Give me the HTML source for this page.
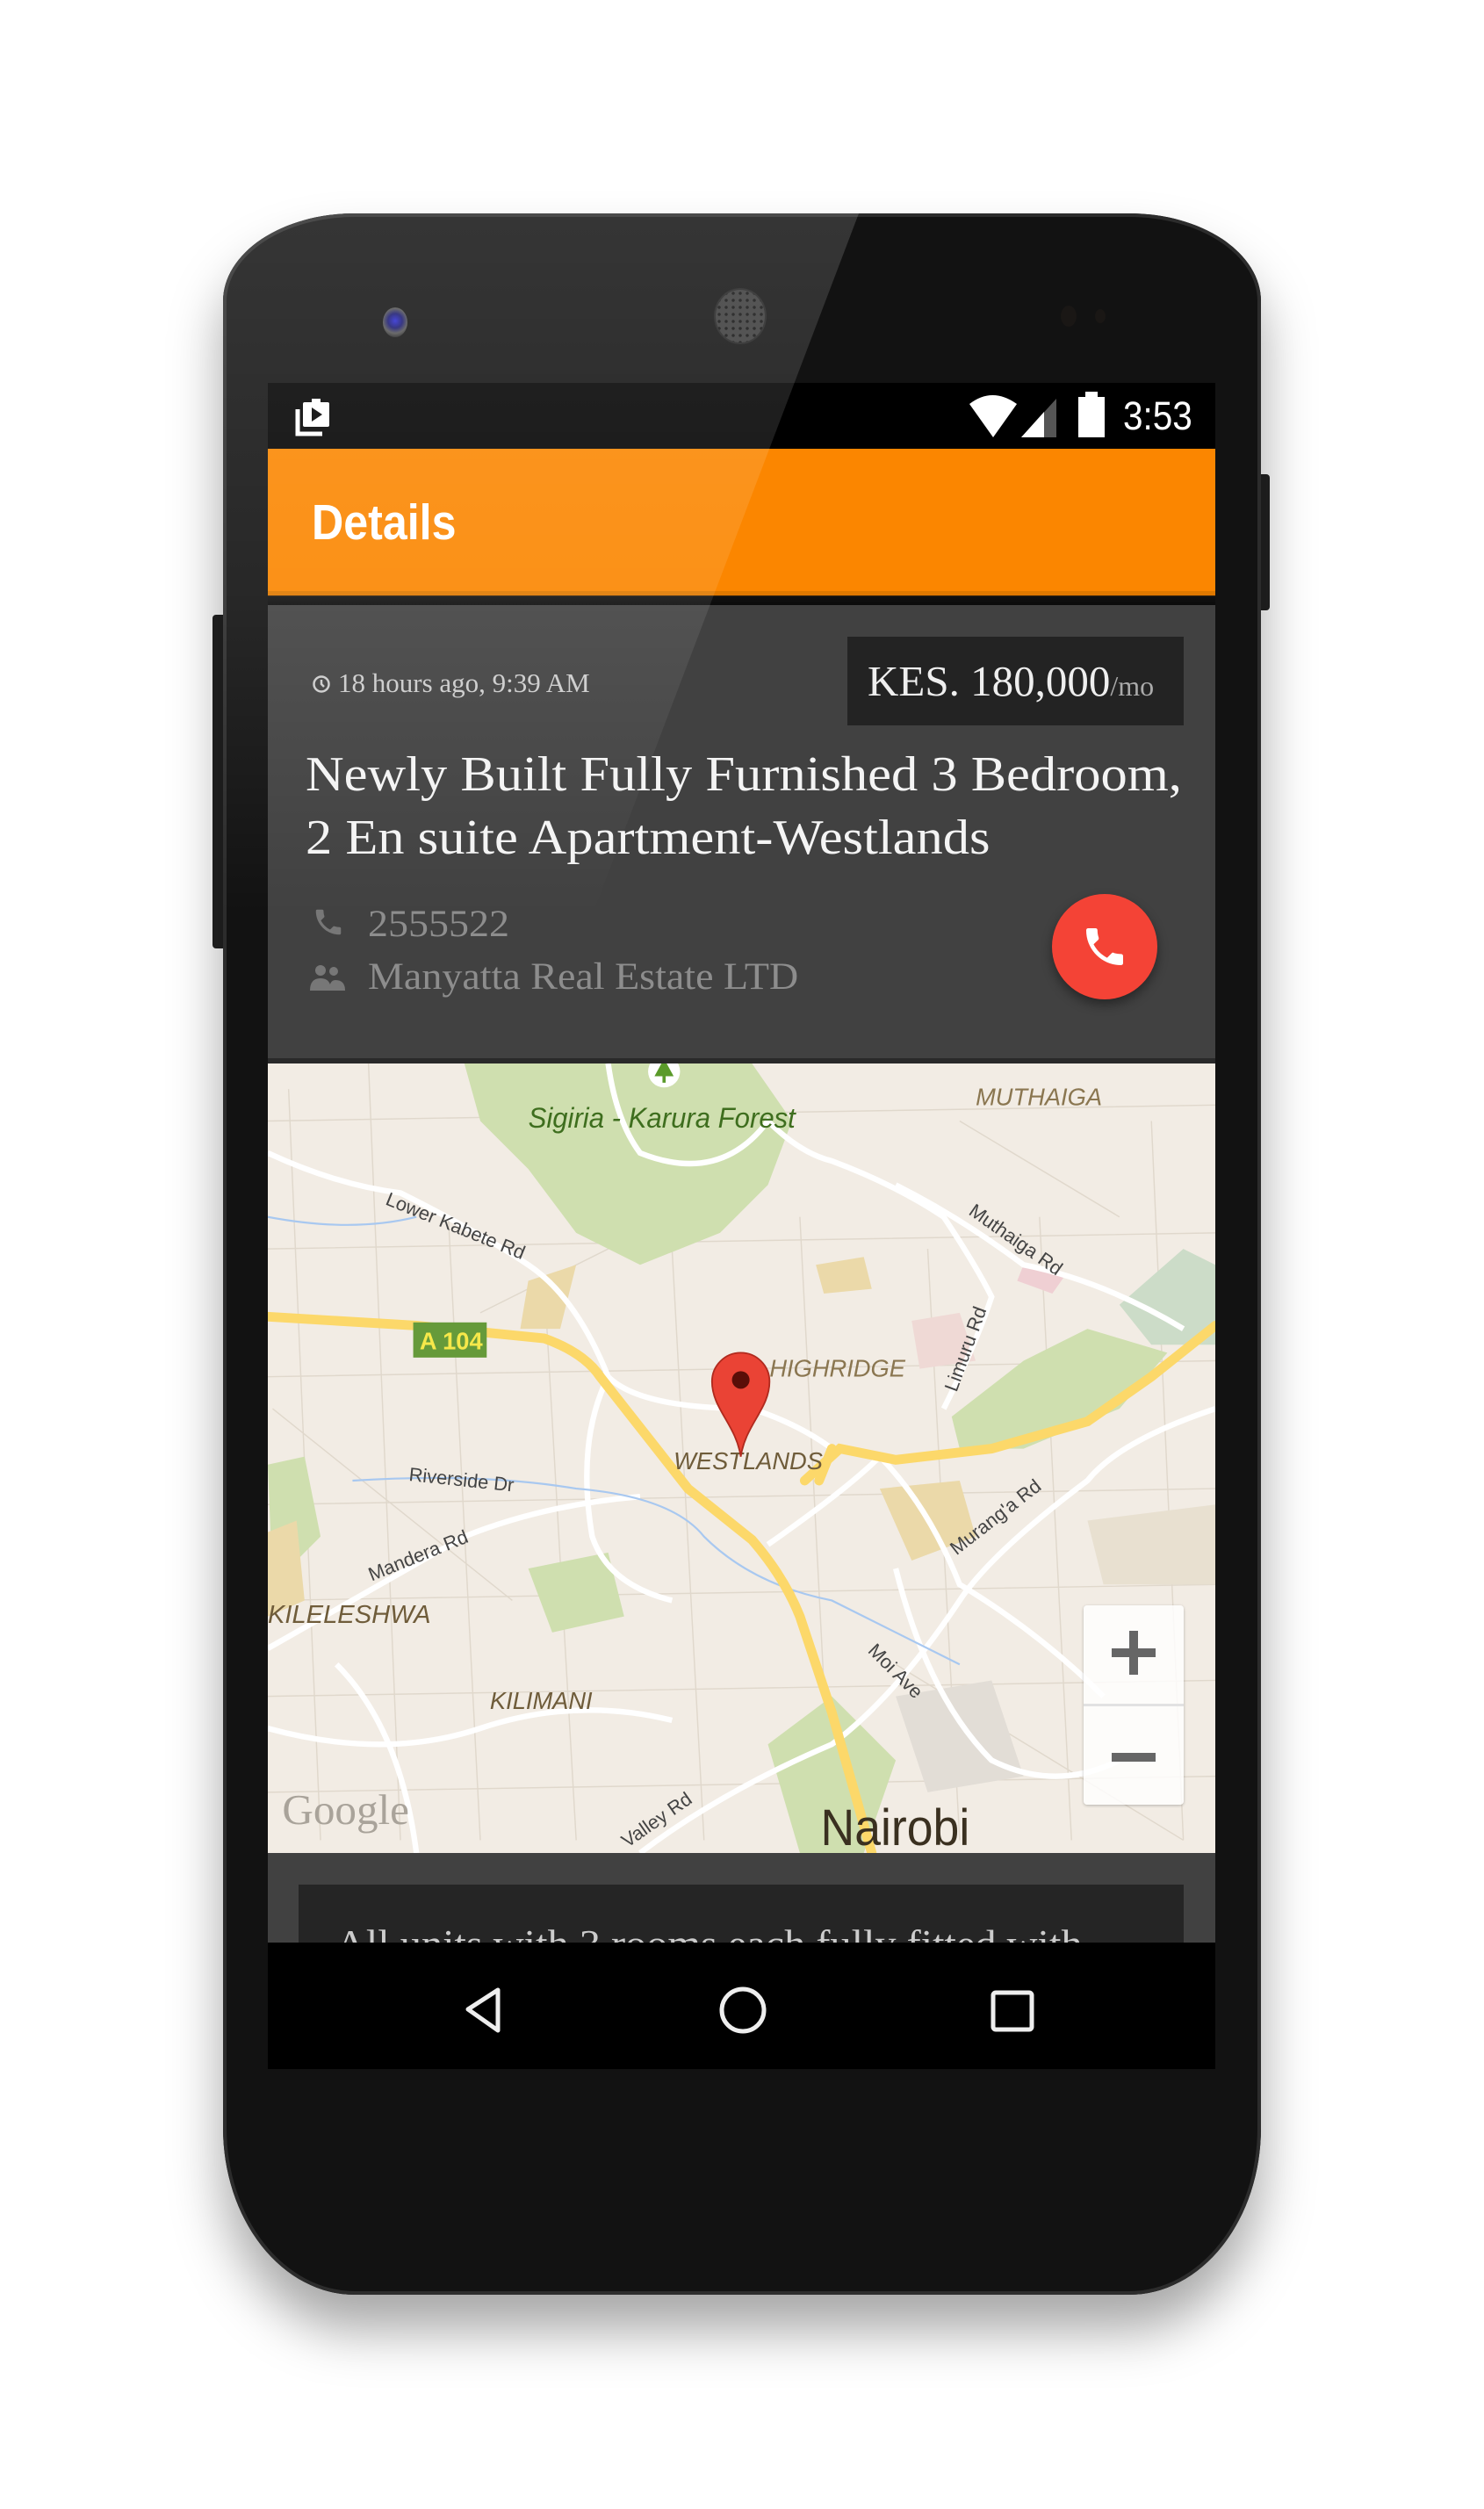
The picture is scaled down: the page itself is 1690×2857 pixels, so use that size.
<!DOCTYPE html>
<html><head><meta charset="utf-8">
<style>
*{margin:0;padding:0;box-sizing:border-box}
html,body{width:1690px;height:2857px;background:#fff;overflow:hidden;position:relative}
.abs{position:absolute}
.phone{left:254px;top:243px;width:1182px;height:2370px;background:#121212;border-radius:150px 150px 150px 150px / 100px 100px 190px 190px;box-shadow:0 40px 60px rgba(0,0,0,.35),inset 0 0 0 4px #2c2c2c;overflow:hidden}
.glare{left:254px;top:243px;width:1182px;height:800px;background:linear-gradient(180deg,rgba(255,255,255,.15),rgba(255,255,255,.09) 55%,rgba(255,255,255,0));clip-path:polygon(0 0,724px 0,420px 800px,0 800px);border-radius:150px 0 0 0/100px 0 0 0;pointer-events:none}
.btn{background:#222}
.screen{left:305px;top:436px;width:1079px;height:1920px;background:#000;overflow:hidden}
.serif{font-family:"Liberation Serif","DejaVu Serif",serif}
.sans{font-family:"Liberation Sans",sans-serif}
</style></head><body>
<div class="abs btn" style="left:1432px;top:540px;width:14px;height:155px;border-radius:0 4px 4px 0"></div>
<div class="abs btn" style="left:242px;top:700px;width:14px;height:380px;border-radius:4px 0 0 4px"></div>
<div class="abs phone"></div>
<div class="abs" style="left:436px;top:350px;width:28px;height:34px;border-radius:50%;background:radial-gradient(circle at 50% 45%,#2a2ad0 0,#1a1a70 35%,#555 60%,#2a2a2a 80%)"></div>
<div class="abs" style="left:815px;top:330px;width:56px;height:60px;border-radius:50%;background:radial-gradient(#111 1.5px,#3a3a3a 2px) 0 0/8px 8px;box-shadow:0 0 0 2px #222"></div>
<div class="abs" style="left:1208px;top:348px;width:18px;height:24px;border-radius:50%;background:#1a1715"></div>
<div class="abs" style="left:1247px;top:352px;width:12px;height:16px;border-radius:50%;background:#1a1715"></div>

<div class="abs screen">
  <div class="abs" style="left:0;top:0;width:1079px;height:75px;background:#000"></div>
  <svg class="abs" style="left:30px;top:18px" width="46" height="44" viewBox="0 0 46 44"><rect x="10" y="4" width="30" height="28" rx="2" fill="#fff"/><rect x="20" y="0" width="10" height="6" fill="#fff"/><polygon points="20,10 32,18 20,26" fill="#000"/><path d="M4 12 V40 H32" stroke="#fff" stroke-width="5" fill="none"/></svg>
  <svg class="abs" style="left:797px;top:12px" width="60" height="52" viewBox="0 0 60 52"><path d="M2 12 Q28 -8 56 12 L29 50 Z" fill="#fff"/></svg>
  <svg class="abs" style="left:858px;top:16px" width="44" height="48" viewBox="0 0 44 48"><polygon points="0,46 40,2 40,46" fill="#555"/><polygon points="0,46 26,17 26,46" fill="#fff"/></svg>
  <div class="abs" style="left:923px;top:16px;width:30px;height:46px;background:#fff"></div>
  <div class="abs" style="left:931px;top:10px;width:14px;height:8px;background:#fff"></div>
  <div class="abs sans" style="left:974px;top:8px;font-size:45px;color:#fff;line-height:60px;transform:scaleX(.9);transform-origin:left">3:53</div>
  <div class="abs" style="left:0;top:75px;width:1079px;height:162px;background:#fb8600"></div>
  <div class="abs" style="left:0;top:237px;width:1079px;height:16px;background:linear-gradient(#df7a00 0,#e07800 30%,#111 35%,#0b0b0b)"></div>
  <div class="abs sans" style="left:50px;top:124px;font-size:57px;font-weight:bold;color:#fff;line-height:70px;transform:scaleX(.88);transform-origin:left">Details</div>
  <div class="abs" style="left:0;top:253px;width:1079px;height:516px;background:#414141"></div>
  <svg class="abs" style="left:50px;top:331px" width="22" height="24" viewBox="0 0 22 24"><circle cx="11" cy="12" r="8.5" stroke="#ccc" stroke-width="2.5" fill="none"/><path d="M11 7 V12 L14 15" stroke="#ccc" stroke-width="2.5" fill="none"/></svg>
  <div class="abs serif" style="left:80px;top:322px;font-size:31px;color:#ccc;line-height:40px">18 hours ago, 9:39 AM</div>
  <div class="abs" style="left:660px;top:289px;width:383px;height:101px;background:#232323"></div>
  <div class="abs serif" style="left:683px;top:310px;font-size:49px;color:#eee;line-height:60px;white-space:nowrap">KES. 180,000<span style="font-size:32px;color:#aaa">/mo</span></div>
  <div class="abs serif" style="left:43px;top:410px;font-size:56px;color:#f4f4f4;line-height:72px;white-space:nowrap;transform:scaleX(1.08);transform-origin:left">Newly Built Fully Furnished 3 Bedroom,<br>2 En suite Apartment-Westlands</div>
  <svg class="abs" style="left:50px;top:595px" width="38" height="38" viewBox="0 0 24 24"><path d="M6.6 10.8c1.4 2.8 3.8 5.1 6.6 6.6l2.2-2.2c.3-.3.7-.4 1-.2 1.1.4 2.3.6 3.6.6.6 0 1 .4 1 1V20c0 .6-.4 1-1 1C10.6 21 3 13.4 3 4c0-.6.4-1 1-1h3.5c.6 0 1 .4 1 1 0 1.3.2 2.5.6 3.6.1.3 0 .7-.2 1L6.6 10.8z" fill="#777"/></svg>
  <div class="abs serif" style="left:114px;top:590px;font-size:43px;color:#8d8d8d;line-height:54px;transform:scaleX(1.07);transform-origin:left">2555522</div>
  <svg class="abs" style="left:48px;top:660px" width="40" height="34" viewBox="0 0 40 34"><circle cx="12" cy="9" r="6" fill="#777"/><circle cx="27" cy="10" r="5" fill="#777"/><path d="M0 32 Q0 18 12 18 Q24 18 24 32 Z M22 32 Q22 20 29 20 Q40 20 40 32 Z" fill="#777"/></svg>
  <div class="abs serif" style="left:114px;top:650px;font-size:43px;color:#8d8d8d;line-height:54px;white-space:nowrap;transform:scaleX(1.07);transform-origin:left">Manyatta Real Estate LTD</div>
  <div class="abs" style="left:893px;top:582px;width:120px;height:120px;border-radius:50%;background:#f44336;box-shadow:0 6px 12px rgba(0,0,0,.4)"></div>
  <svg class="abs" style="left:925px;top:614px" width="56" height="56" viewBox="0 0 24 24"><path d="M6.6 10.8c1.4 2.8 3.8 5.1 6.6 6.6l2.2-2.2c.3-.3.7-.4 1-.2 1.1.4 2.3.6 3.6.6.6 0 1 .4 1 1V20c0 .6-.4 1-1 1C10.6 21 3 13.4 3 4c0-.6.4-1 1-1h3.5c.6 0 1 .4 1 1 0 1.3.2 2.5.6 3.6.1.3 0 .7-.2 1L6.6 10.8z" fill="#fff"/></svg>
  <div class="abs" style="left:0;top:769px;width:1079px;height:6px;background:#2a2a2a"></div>
  <svg class="abs" style="left:0;top:775px" width="1079" height="899" viewBox="167 664 593 494" preserveAspectRatio="none">
    <rect x="167" y="664" width="593" height="494" fill="#f2ece4"/>
    <g stroke="#e0d8cc" stroke-width="0.8" fill="none">
      <path d="M180,680 L200,1150 M230,664 L250,1150 M280,760 L300,1150 M340,800 L360,1150 M420,780 L440,1150 M500,760 L520,1150 M580,780 L600,1150 M650,760 L670,1150 M720,700 L740,1150"/>
      <path d="M167,700 L760,690 M167,780 L760,770 M167,860 L760,850 M167,940 L760,930 M167,1000 L760,990 M167,1060 L760,1050 M167,1120 L760,1110"/>
      <path d="M170,880 L320,1000 M560,1040 L740,1150 M600,700 L700,760 M300,820 L420,760"/>
    </g>
    <polygon points="290,664 470,664 495,700 480,740 450,770 400,790 360,770 330,730 300,700" fill="#cfdfaf"/>
    <polygon points="595,885 640,850 680,830 730,845 700,880 640,905 600,905" fill="#cfdfaf"/>
    <polygon points="700,815 740,780 760,790 760,840 720,840" fill="#ccdcc8"/>
    <polygon points="330,980 380,970 390,1010 345,1020" fill="#cfdfaf"/>
    <polygon points="167,915 190,910 200,960 170,990" fill="#cfdfaf"/>
    <polygon points="480,1090 520,1060 560,1100 540,1158 500,1158" fill="#cfdfaf"/>
    <polygon points="640,790 665,798 658,808 636,800" fill="#efcfd3"/>
    <polygon points="570,825 600,820 610,850 575,855" fill="#efd9d5"/>
    <polygon points="510,790 540,785 545,805 515,808" fill="#ebd9a9"/>
    <polygon points="160,960 185,950 190,1000 167,1010" fill="#ebd9a9"/>
    <polygon points="550,930 600,925 610,960 570,975" fill="#ebd9a9"/>
    <polygon points="330,800 360,790 350,830 325,830" fill="#ebd9a9"/>
    <polygon points="680,950 760,940 760,990 690,990" fill="#e8e0d0"/>
    <polygon points="560,1060 620,1050 640,1110 580,1120" fill="#e2ddd6"/>
    <g stroke="#fff" stroke-width="3.5" fill="none">
      <path d="M167,720 Q210,740 250,745 Q300,770 330,790 Q360,810 380,860 Q400,880 470,880 Q500,890 520,905"/>
      <path d="M380,664 Q385,700 400,720 Q450,740 480,700 Q500,720 520,725 Q560,740 590,760 Q610,790 620,810 Q610,840 590,880"/>
      <path d="M560,740 Q600,760 640,790 Q690,800 740,830"/>
      <path d="M480,965 Q530,930 550,910 Q580,940 600,990 Q650,1020 690,1060"/>
      <path d="M400,1158 Q450,1120 520,1090 Q560,1060 600,1000 Q620,970 680,925 Q700,900 760,880"/>
      <path d="M167,1030 Q220,1000 290,960 Q340,940 400,935"/>
      <path d="M167,1080 Q240,1100 300,1080 Q360,1060 420,1075"/>
      <path d="M210,1040 Q250,1080 260,1158"/>
      <path d="M560,980 Q580,1060 620,1100 Q660,1120 700,1100"/>
      <path d="M380,860 Q360,900 370,960 Q380,990 420,1000"/>
    </g>
    <g stroke="#a8c8f0" stroke-width="1.2" fill="none">
      <path d="M167,760 Q220,770 260,760"/>
      <path d="M220,925 Q300,920 360,930 Q420,935 440,960 Q470,990 520,1000 Q560,1020 600,1040"/>
    </g>
    <g stroke="#fcd86a" stroke-width="6" fill="none" stroke-linecap="round">
      <path d="M160,822 L260,828 L340,836 Q365,845 375,860 L430,930 L470,962 Q490,985 500,1010 L520,1070 L545,1158"/>
      <path d="M503,925 L525,905 L560,912 L620,905 L680,888 L720,860 L760,828"/>
      <path d="M520,905 L512,925"/>
    </g>
    <rect x="258" y="826" width="46" height="22" fill="#669a3a"/>
    <text x="262" y="843" font-family="Liberation Sans" font-size="15" font-weight="bold" fill="#f6e84a">A 104</text>
    <circle cx="415" cy="669" r="10" fill="#fff"/>
    <path d="M415,661 L409,672 L421,672 Z M414,672 h2 v4 h-2z" fill="#5a9a2a"/>
    <g font-family="Liberation Sans" font-style="italic">
      <text x="330" y="704" font-size="18" fill="#3e6e1e" transform="scale(0.95,1)" transform-origin="330 704">Sigiria - Karura Forest</text>
      <text x="610" y="690" font-size="15" fill="#8a7650">MUTHAIGA</text>
      <text x="481" y="860" font-size="15" fill="#8a7650">HIGHRIDGE</text>
      <text x="421" y="918" font-size="15" fill="#6f5c3a">WESTLANDS</text>
      <text x="167" y="1014" font-size="16" fill="#6f5c3a">KILELESHWA</text>
      <text x="306" y="1068" font-size="15" fill="#6f5c3a">KILIMANI</text>
    </g>
    <g font-family="Liberation Sans" font-size="12" fill="#444">
      <text x="240" y="752" transform="rotate(22 240 752)">Lower Kabete Rd</text>
      <text x="605" y="758" transform="rotate(35 605 758)">Muthaiga Rd</text>
      <text x="598" y="870" transform="rotate(-70 598 870)">Limuru Rd</text>
      <text x="255" y="925" transform="rotate(6 255 925)">Riverside Dr</text>
      <text x="232" y="988" transform="rotate(-22 232 988)">Mandera Rd</text>
      <text x="598" y="972" transform="rotate(-38 598 972)">Murang'a Rd</text>
      <text x="542" y="1032" transform="rotate(45 542 1032)">Moi Ave</text>
      <text x="392" y="1155" transform="rotate(-35 392 1155)">Valley Rd</text>
    </g>
    <text x="176" y="1140" font-family="Liberation Serif" font-size="27" fill="#a9a39a">Google</text>
    <text x="513" y="1153" font-family="Liberation Sans" font-size="32" fill="#3a3020" transform="scale(0.92,1)" transform-origin="513 1153">Nairobi</text>
    <path d="M463,910 C460,890 445,880 445,863 A18,18 0 1 1 481,863 C481,880 466,890 463,910 Z" fill="#ea4335" stroke="#b02a1e" stroke-width="1"/>
    <circle cx="463" cy="862" r="5.5" fill="#5a0e08"/>
  </svg>
  <div class="abs" style="left:929px;top:1392px;width:114px;height:227px;background:rgba(255,255,255,.82);border-radius:4px;box-shadow:0 1px 3px rgba(0,0,0,.25)"></div>
  <div class="abs" style="left:929px;top:1504px;width:114px;height:3px;background:#e2e2e2"></div>
  <div class="abs" style="left:961px;top:1441px;width:50px;height:10px;background:#666"></div>
  <div class="abs" style="left:981px;top:1421px;width:10px;height:50px;background:#666"></div>
  <div class="abs" style="left:961px;top:1560px;width:50px;height:10px;background:#666"></div>
  <div class="abs" style="left:0;top:1674px;width:1079px;height:102px;background:#414141"></div>
  <div class="abs" style="left:35px;top:1710px;width:1008px;height:80px;background:#252525;overflow:hidden">
    <div class="abs serif" style="left:42px;top:40px;font-size:46px;color:#ccc;line-height:56px;white-space:nowrap;transform:scaleX(1.05);transform-origin:left">All units with 3 rooms each fully fitted with</div>
  </div>
  <div class="abs" style="left:0;top:1776px;width:1079px;height:144px;background:#000"></div>
  <svg class="abs" style="left:0;top:1776px" width="1079" height="144" viewBox="0 0 1079 144">
    <path d="M262,54 L228,76 L262,100 Z" stroke="#eee" stroke-width="5" fill="none" stroke-linejoin="round"/>
    <ellipse cx="541" cy="77" rx="24" ry="24" stroke="#eee" stroke-width="5" fill="none"/>
    <rect x="826" y="57" width="44" height="42" rx="3" stroke="#eee" stroke-width="5" fill="none"/>
  </svg>
</div>
<div class="abs glare"></div>
</body></html>
